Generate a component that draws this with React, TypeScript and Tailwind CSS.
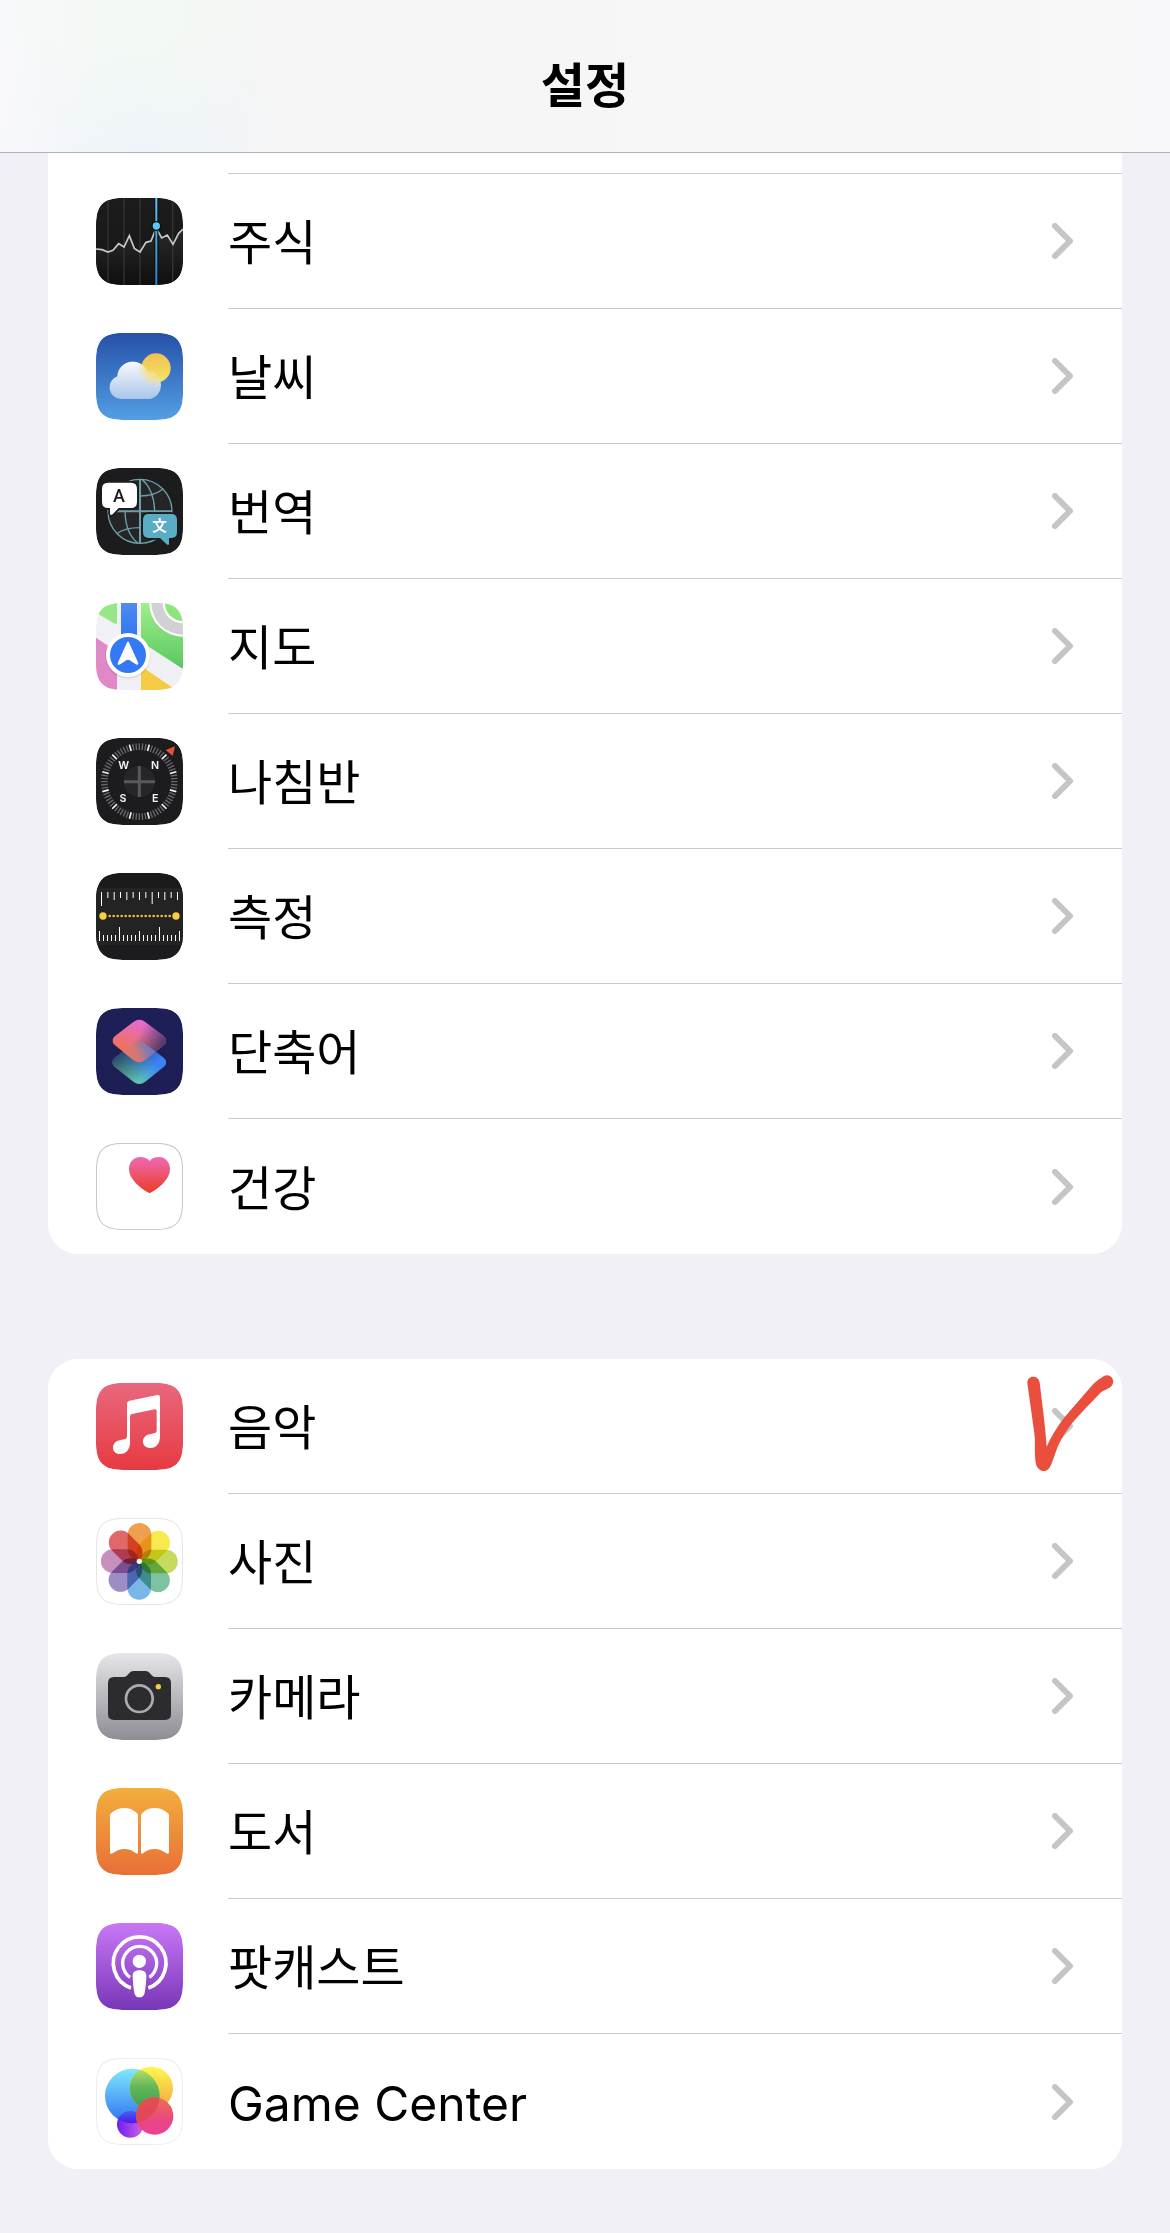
import React from "react";

interface SettingsItem {
  id: string;
  label: string;
  icon: React.ReactNode;
  marked?: boolean;
}

interface TileProps {
  id: string;
  from: string;
  to: string;
  border?: string;
  children: React.ReactNode;
}

const SQUIRCLE =
  "M80 0H181C239 0 261 22 261 80V181C261 239 239 261 181 261H80C22 261 0 239 0 181V80C0 22 22 0 80 0Z";

// Shared rounded tile, every app icon is drawn on a 261 unit grid
function Tile({ id, from, to, border, children }: TileProps) {
  return (
    <svg viewBox="0 0 261 261" className="size-[87px] shrink-0" aria-hidden="true">
      <defs>
        <linearGradient id={`${id}-bg`} x1="0" y1="0" x2="0" y2="1">
          <stop offset="0" stopColor={from} />
          <stop offset="1" stopColor={to} />
        </linearGradient>
        <clipPath id={`${id}-clip`}>
          <path d={SQUIRCLE} />
        </clipPath>
      </defs>
      <g clipPath={`url(#${id}-clip)`}>
        <path d={SQUIRCLE} fill={`url(#${id}-bg)`} />
        {children}
        {border && (
          <path d={SQUIRCLE} fill="none" stroke={border} strokeWidth="6" />
        )}
      </g>
    </svg>
  );
}

function StocksIcon() {
  return (
    <Tile id="stocks" from="#1c1c1c" to="#161616">
      <defs>
        <linearGradient id="stocks-area" x1="0" y1="0" x2="0" y2="1">
          <stop offset="0" stopColor="#2a2a2a" />
          <stop offset="1" stopColor="#0e0e0e" />
        </linearGradient>
        <linearGradient id="stocks-line" x1="0" y1="0" x2="0" y2="1">
          <stop offset="0" stopColor="#5ac8fa" />
          <stop offset="1" stopColor="#2f80c8" />
        </linearGradient>
      </defs>
      <path
        d="M0 153L18 155L36 162L51 157L68 137L84 147L100 113L115 151L132 162L150 133L165 129L178 96H184L197 120L214 111L231 139L248 106L261 93V261H0Z"
        fill="url(#stocks-area)"
      />
      <path d="M36 0V261M84 0V261M132 0V261M230 0V261" stroke="#343434" strokeWidth="4" />
      <path
        d="M0 153L18 155L36 162L51 157L68 137L84 147L100 113L115 151L132 162L150 133L165 129L178 96H184L197 120L214 111L231 139L248 106L261 93"
        fill="none"
        stroke="#c9c9c9"
        strokeWidth="5"
      />
      <path d="M181 0V261" stroke="#0c0c0c" strokeWidth="12" />
      <rect x="178" y="0" width="6" height="261" fill="url(#stocks-line)" />
      <circle cx="181" cy="84" r="13" fill="#5ac8fa" stroke="#0c0c0c" strokeWidth="4" />
    </Tile>
  );
}

function WeatherIcon() {
  return (
    <Tile id="weather" from="#2650a8" to="#539fe4">
      <defs>
        <linearGradient id="weather-sun" x1="0" y1="0" x2="0" y2="1">
          <stop offset="0" stopColor="#f0c052" />
          <stop offset="1" stopColor="#f6e566" />
        </linearGradient>
        <linearGradient id="weather-cloud" x1="0" y1="84" x2="0" y2="198" gradientUnits="userSpaceOnUse">
          <stop offset="0" stopColor="#fafbff" />
          <stop offset="1" stopColor="#a9c6e9" />
        </linearGradient>
        <radialGradient id="weather-glow" cx="180" cy="105" r="56" gradientUnits="userSpaceOnUse">
          <stop offset="0.5" stopColor="#f3e08c" />
          <stop offset="1" stopColor="#f3e08c" stopOpacity="0" />
        </radialGradient>
        <clipPath id="weather-shape">
          <path d="M74 198A35 35 0 0 1 64 130A46 46 0 0 1 153 115A42 42 0 0 1 162 198Z" />
        </clipPath>
      </defs>
      <circle cx="180" cy="105" r="44" fill="url(#weather-sun)" />
      <g clipPath="url(#weather-shape)">
        <rect x="30" y="80" width="180" height="120" fill="url(#weather-cloud)" />
        <rect x="30" y="80" width="180" height="120" fill="url(#weather-glow)" />
      </g>
    </Tile>
  );
}

function TranslateIcon() {
  return (
    <Tile id="translate" from="#1c1c1e" to="#1c1c1e">
      <circle cx="132" cy="130" r="96" fill="#252525" />
      <g fill="none" stroke="#6da0ad" strokeWidth="4">
        <circle cx="132" cy="130" r="96" />
        <path d="M138 34C160 54 175 88 176 130M132 84C160 84 182 78 200 64" />
        <path d="M87 130C88 172 100 206 126 226M132 179C105 179 80 184 62 197" />
        <path d="M132 34V226M36 130H228" strokeWidth="6" />
      </g>
      <g stroke="#1c1c1e" strokeWidth="10" paintOrder="stroke">
        <path
          d="M36 44H105Q123 44 123 62V102Q123 120 105 120H68L50 139Q42 145 42 135V120H36Q18 120 18 102V62Q18 44 36 44Z"
          fill="#fff"
        />
        <path
          d="M158 138H226Q243 138 243 155V193Q243 210 226 210H219V227Q218 234 212 229L192 210H158Q141 210 141 193V155Q141 138 158 138Z"
          fill="#5aadc5"
        />
      </g>
      <text x="69" y="103" textAnchor="middle" fontSize="54" fontWeight="500" fill="#1c1c1e" fontFamily="Roboto, sans-serif">
        A
      </text>
      <text x="191" y="190" textAnchor="middle" fontSize="44" fontWeight="700" fill="#fff" fontFamily="'Noto Sans CJK SC', sans-serif">
        文
      </text>
    </Tile>
  );
}

function MapsIcon() {
  return (
    <Tile id="maps" from="#f2f1f7" to="#f0eff5">
      <defs>
        <linearGradient id="maps-green" x1="0" y1="0" x2="0" y2="1">
          <stop offset="0" stopColor="#a0ee8c" />
          <stop offset="1" stopColor="#5ac760" />
        </linearGradient>
        <linearGradient id="maps-road" x1="0" y1="0" x2="0" y2="1">
          <stop offset="0" stopColor="#508cee" />
          <stop offset="1" stopColor="#2e74f5" />
        </linearGradient>
      </defs>
      <path d="M0 0H63V59Q62 64 57 62L0 29Z" fill="#98e786" />
      <path d="M135 0H261V198L135 116Z" fill="url(#maps-green)" />
      <path d="M75 0H123V110H75Z" fill="url(#maps-road)" />
      <path d="M0 104L63 146V261H0Z" fill="#e188c6" />
      <path d="M135 189L240 261H135Z" fill="#f5cb45" />
      <circle cx="261" cy="0" r="101" fill="#fff" />
      <circle cx="261" cy="0" r="95" fill="#d1d0d5" />
      <circle cx="261" cy="0" r="61" fill="#fff" />
      <circle cx="261" cy="0" r="54" fill="#8be67c" />
      <circle cx="96" cy="160" r="68" fill="#000" opacity="0.08" />
      <circle cx="96" cy="156" r="66" fill="#fff" />
      <circle cx="96" cy="156" r="54" fill="#3478f6" />
      <path
        d="M96 119L124 181Q125 183 122 182L96 165L70 182Q67 183 68 181Z"
        fill="#fff"
        stroke="#fff"
        strokeWidth="6"
        strokeLinejoin="round"
      />
    </Tile>
  );
}

function CompassIcon() {
  const ticks = Array.from({ length: 72 }, (_, i) => i * 5);
  return (
    <Tile id="compass" from="#1c1c1e" to="#1c1c1e">
      {ticks.map((angle) => {
        const major = angle % 30 === 15;
        return (
          <path
            key={angle}
            d="M130 16V36"
            transform={`rotate(${angle} 130 131)`}
            stroke={major ? "#f5f5f5" : "#69696b"}
            strokeWidth={major ? 5 : 4}
          />
        );
      })}
      <circle cx="130" cy="131" r="47" fill="#262628" />
      <path d="M130 84V177M84 131H177" stroke="#59595b" strokeWidth="9" />
      <g fill="#f5f5f5" fontSize="32" fontWeight="600" fontFamily="Inter, sans-serif" textAnchor="middle">
        <text x="83" y="94">W</text>
        <text x="177" y="94">N</text>
        <text x="81" y="193">S</text>
        <text x="178" y="193">E</text>
      </g>
      <path d="M209 36L237 25L230 54Z" fill="#eb4d3d" />
    </Tile>
  );
}

function MeasureIcon() {
  const topTicks = [42, 18, 24, 18, 24, 18, 24, 18, 36, 18, 24, 18, 24];
  const bottomTicks = Array.from({ length: 21 }, (_, i) => {
    if (i % 10 === 5) return 42;
    return i % 5 === 0 ? 30 : 18;
  });
  const dots = Array.from({ length: 16 }, (_, i) => 41 + i * 12);
  return (
    <Tile id="measure" from="#1a1a1c" to="#1c1c1e">
      <rect y="44" width="261" height="172" fill="#232323" />
      {topTicks.map((size, i) => (
        <rect key={i} x={15 + i * 19} y="57" width="3" height={size} fill="#fff" />
      ))}
      {bottomTicks.map((size, i) => (
        <rect key={i} x={9 + i * 12} y={204 - size} width="3" height={size} fill="#fff" />
      ))}
      {dots.map((x) => (
        <circle key={x} cx={x} cy="129" r="4" fill="#e5bd3f" />
      ))}
      <circle cx="21" cy="129" r="11" fill="#f7ce46" />
      <circle cx="240" cy="129" r="11" fill="#f7ce46" />
    </Tile>
  );
}

function ShortcutsIcon() {
  return (
    <Tile id="shortcuts" from="#1d1f56" to="#1c1e54">
      <defs>
        <linearGradient id="shortcuts-low" x1="0.1" y1="0.9" x2="0.9" y2="0.3">
          <stop offset="0.1" stopColor="#6bd89a" />
          <stop offset="0.8" stopColor="#3b82f7" />
        </linearGradient>
        <linearGradient id="shortcuts-low-fade" x1="0" y1="0.3" x2="0.6" y2="0.8">
          <stop offset="0" stopColor="#1d2b58" stopOpacity="0.9" />
          <stop offset="1" stopColor="#1d2b58" stopOpacity="0" />
        </linearGradient>
        <linearGradient id="shortcuts-top" x1="0.7" y1="0" x2="0.3" y2="1">
          <stop offset="0.05" stopColor="#e56ad9" />
          <stop offset="0.75" stopColor="#f0715a" />
        </linearGradient>
        <linearGradient id="shortcuts-top-fade" x1="0.45" y1="0.4" x2="1" y2="0.65">
          <stop offset="0" stopColor="#4b3c78" stopOpacity="0" />
          <stop offset="0.8" stopColor="#4b3568" stopOpacity="0.9" />
        </linearGradient>
        <linearGradient id="shortcuts-mix" x1="0.2" y1="0.5" x2="0.85" y2="0.3">
          <stop offset="0" stopColor="#ee7460" />
          <stop offset="0.45" stopColor="#cf7878" />
          <stop offset="1" stopColor="#4c7ad8" />
        </linearGradient>
        <clipPath id="shortcuts-clip-top">
          <path d="M112 42Q130 27 148 42L203 84Q219 98 203 112L148 156Q130 170 112 156L57 112Q41 98 57 84Z" />
        </clipPath>
      </defs>
      <path
        d="M112 107Q130 92 148 107L203 149Q219 163 203 177L148 221Q130 235 112 221L57 177Q41 163 57 149Z"
        fill="url(#shortcuts-low)"
      />
      <path
        d="M112 107Q130 92 148 107L203 149Q219 163 203 177L148 221Q130 235 112 221L57 177Q41 163 57 149Z"
        fill="url(#shortcuts-low-fade)"
      />
      <g clipPath="url(#shortcuts-clip-top)">
        <rect x="49" y="34" width="162" height="130" fill="url(#shortcuts-top)" />
        <rect x="49" y="34" width="162" height="130" fill="url(#shortcuts-top-fade)" />
        <path
          d="M112 107Q130 92 148 107L203 149Q219 163 203 177L148 221Q130 235 112 221L57 177Q41 163 57 149Z"
          fill="url(#shortcuts-mix)"
        />
      </g>
    </Tile>
  );
}

function HealthIcon() {
  return (
    <Tile id="health" from="#fff" to="#fff" border="#c8c8c8">
      <defs>
        <linearGradient id="health-heart" x1="0" y1="0" x2="0" y2="1">
          <stop offset="0" stopColor="#ee69b4" />
          <stop offset="1" stopColor="#eb3d26" />
        </linearGradient>
      </defs>
      <path
        d="M161 150C158 150 99 119 99 78C99 57 113 42 132 42C145 42 155 46 161 54C166 46 177 42 190 42C208 42 222 57 222 78C222 119 164 150 161 150Z"
        fill="url(#health-heart)"
      />
    </Tile>
  );
}

function MusicIcon() {
  return (
    <Tile id="music" from="#e9687d" to="#e63a41">
      <path
        d="M93 62Q93 55 100 53L184 36Q192 35 192 43V160C192 182 181 195 163 195C150 195 141 187 141 176C141 164 149 156 162 154L174 151Q182 150 182 142V84Q182 78 177 79L108 93Q102 94 102 100V178C102 201 90 213 72 213C59 213 51 205 51 194C51 182 59 174 73 171L85 169Q93 167 93 158Z"
        fill="#fff"
      />
    </Tile>
  );
}

const PETALS = [
  "#efa04e",
  "#f8e94e",
  "#c6da5d",
  "#7dc3a0",
  "#79b7e6",
  "#9c8dc6",
  "#c68fbd",
  "#e0686a",
];

function PhotosIcon() {
  return (
    <Tile id="photos" from="#fff" to="#fff" border="#e6e6e6">
      <g className="isolate">
        {PETALS.map((color, i) => (
          <rect
            key={color}
            x="95"
            y="15"
            width="71"
            height="113"
            rx="35"
            fill={color}
            transform={`rotate(${i * 45} 130 130)`}
            className="mix-blend-multiply"
          />
        ))}
      </g>
      <circle cx="130" cy="130" r="8" fill="#fff" />
    </Tile>
  );
}

function CameraIcon() {
  return (
    <Tile id="camera" from="#e5e5ea" to="#8e8d93">
      <path
        d="M54 72H84Q90 72 94 67L100 60Q105 54 112 54H149Q156 54 161 60L167 67Q171 72 177 72H207Q225 72 225 90V184Q225 201 207 201H54Q36 201 36 184V90Q36 72 54 72Z"
        fill="#2c2c2e"
      />
      <circle cx="130" cy="137" r="40" fill="none" stroke="#ababb0" strokeWidth="8" />
      <circle cx="187" cy="101" r="8" fill="#f7ce46" />
    </Tile>
  );
}

function BooksIcon() {
  return (
    <Tile id="books" from="#f3ae3d" to="#e86f37">
      <path
        d="M42 83Q42 79 45 76C68 54 104 55 123 76Q126 79 126 83V192Q126 200 120 196C100 179 72 179 50 196Q42 200 42 193Z"
        fill="#fff"
      />
      <path
        d="M135 83Q135 79 138 76C157 55 193 54 216 76Q219 79 219 83V193Q219 200 211 196C189 179 161 179 141 196Q135 200 135 192Z"
        fill="#fff"
      />
    </Tile>
  );
}

function PodcastsIcon() {
  return (
    <Tile id="podcasts" from="#c878f6" to="#7836b7">
      <g fill="none" stroke="#fff">
        <path d="M105 195A79 79 0 1 1 157 195" strokeWidth="11" />
        <path d="M102 163A51 51 0 1 1 160 163" strokeWidth="10" />
      </g>
      <circle cx="130" cy="115" r="20" fill="#fff" />
      <path
        d="M130 142C145 142 152 148 151 162C150 178 149 195 146 209C144 219 139 223 130 223C122 223 117 219 115 209C112 195 111 178 110 162C109 148 116 142 130 142Z"
        fill="#fff"
      />
    </Tile>
  );
}

function GameCenterIcon() {
  return (
    <Tile id="game" from="#fff" to="#fff" border="#ededed">
      <defs>
        <linearGradient id="game-blue" x1="0" y1="0" x2="0" y2="1">
          <stop offset="0" stopColor="#7feafa" />
          <stop offset="1" stopColor="#2f70f5" />
        </linearGradient>
        <linearGradient id="game-yellow" x1="0" y1="0" x2="0" y2="1">
          <stop offset="0" stopColor="#fdf84f" />
          <stop offset="1" stopColor="#f2a23f" />
        </linearGradient>
        <linearGradient id="game-green" x1="0" y1="0" x2="0" y2="1">
          <stop offset="0" stopColor="#c5e26b" />
          <stop offset="0.45" stopColor="#63b959" />
          <stop offset="1" stopColor="#3d9a50" />
        </linearGradient>
        <linearGradient id="game-red" x1="0" y1="0" x2="0" y2="1">
          <stop offset="0" stopColor="#ec7250" />
          <stop offset="0.6" stopColor="#ea4782" />
          <stop offset="1" stopColor="#ec3f96" />
        </linearGradient>
        <linearGradient id="game-purple" x1="0" y1="0" x2="1" y2="0">
          <stop offset="0" stopColor="#6c1df5" />
          <stop offset="1" stopColor="#d363dc" />
        </linearGradient>
        <linearGradient id="game-indigo" x1="0" y1="158" x2="0" y2="196" gradientUnits="userSpaceOnUse">
          <stop offset="0" stopColor="#3a68f0" />
          <stop offset="1" stopColor="#5413ee" />
        </linearGradient>
        <clipPath id="game-clip-blue">
          <circle cx="109" cy="114" r="82" />
        </clipPath>
        <clipPath id="game-clip-red">
          <circle cx="176" cy="174" r="56" />
        </clipPath>
      </defs>
      <circle cx="103" cy="199" r="40" fill="url(#game-purple)" />
      <circle cx="109" cy="114" r="82" fill="url(#game-blue)" />
      <circle cx="166" cy="91" r="65" fill="url(#game-yellow)" />
      <g clipPath="url(#game-clip-blue)">
        <circle cx="103" cy="199" r="40" fill="url(#game-indigo)" />
        <circle cx="166" cy="91" r="65" fill="url(#game-green)" />
      </g>
      <circle cx="176" cy="174" r="56" fill="url(#game-red)" />
      <g clipPath="url(#game-clip-red)">
        <circle cx="109" cy="114" r="82" fill="#e04650" opacity="0.8" />
      </g>
    </Tile>
  );
}

const GENERAL_APPS: SettingsItem[] = [
  { id: "stocks", label: "주식", icon: <StocksIcon /> },
  { id: "weather", label: "날씨", icon: <WeatherIcon /> },
  { id: "translate", label: "번역", icon: <TranslateIcon /> },
  { id: "maps", label: "지도", icon: <MapsIcon /> },
  { id: "compass", label: "나침반", icon: <CompassIcon /> },
  { id: "measure", label: "측정", icon: <MeasureIcon /> },
  { id: "shortcuts", label: "단축어", icon: <ShortcutsIcon /> },
  { id: "health", label: "건강", icon: <HealthIcon /> },
];

const MEDIA_APPS: SettingsItem[] = [
  { id: "music", label: "음악", icon: <MusicIcon />, marked: true },
  { id: "photos", label: "사진", icon: <PhotosIcon /> },
  { id: "camera", label: "카메라", icon: <CameraIcon /> },
  { id: "books", label: "도서", icon: <BooksIcon /> },
  { id: "podcasts", label: "팟캐스트", icon: <PodcastsIcon /> },
  { id: "game-center", label: "Game Center", icon: <GameCenterIcon /> },
];

function Chevron() {
  return (
    <svg viewBox="0 0 22 36" className="h-9 w-[22px] shrink-0" aria-hidden="true">
      <path
        d="M3 3L18 18L3 33"
        fill="none"
        stroke="#c5c5c7"
        strokeWidth="6"
        strokeLinecap="round"
        strokeLinejoin="round"
      />
    </svg>
  );
}

// Hand-drawn red tick
function PenMark() {
  return (
    <svg
      viewBox="138 57 288 360"
      className="pointer-events-none absolute top-0 right-0 h-[120px] w-24"
      aria-hidden="true"
    >
      <path
        d="M142 130C140 104 176 104 179 128L189 210C194 250 198 290 200 320C212 292 228 265 250 236C280 200 312 165 340 132C350 122 362 115 372 108C390 98 408 120 396 136C390 146 372 150 363 157C335 186 300 222 272 255C250 285 236 310 226 340C220 356 216 372 208 384C200 396 184 396 176 386C166 378 166 360 165 345C164 325 166 300 163 280Z"
        fill="#ea4f3d"
      />
    </svg>
  );
}

function SettingsRow({ item }: { item: SettingsItem }) {
  return (
    <li className="group relative">
      <a href={`#${item.id}`} className="flex pl-12">
        <span className="py-6">{item.icon}</span>
        <span className="ml-[45px] flex flex-1 items-center justify-between border-b border-[#cbcbcd] pr-12 group-last:border-b-0">
          <span className="pt-1 text-5xl">{item.label}</span>
          <Chevron />
        </span>
      </a>
      {item.marked && <PenMark />}
    </li>
  );
}

function App() {
  return (
    <div className="min-h-screen bg-[#f1f0f6] pb-12 font-['Inter','Noto_Sans_CJK_KR',sans-serif] text-black">
      {/* Navigation bar */}
      <header className="border-b border-[#b0b0b4] bg-[#f6f6f6] bg-[radial-gradient(circle_at_12%_10%,#f2f9f3,transparent_150px),radial-gradient(circle_at_12%_100%,#edf4fb,transparent_150px),linear-gradient(to_right,#f9f9fb,#f5f5f5_20%,#f7f7f7_85%,#f8f8fa)] pt-14 pb-9">
        <h1 className="text-center text-5xl leading-[60px] font-semibold">설정</h1>
      </header>

      <main className="px-12">
        {/* Tail of the row scrolled under the bar */}
        <div className="bg-white pl-[180px]">
          <div className="h-[21px] border-b border-[#cbcbcd]" />
        </div>
        <ul className="rounded-b-[30px] bg-white">
          {GENERAL_APPS.map((item) => (
            <SettingsRow key={item.id} item={item} />
          ))}
        </ul>

        <ul className="mt-[105px] rounded-[30px] bg-white">
          {MEDIA_APPS.map((item) => (
            <SettingsRow key={item.id} item={item} />
          ))}
        </ul>
      </main>
    </div>
  );
}

export default App;
